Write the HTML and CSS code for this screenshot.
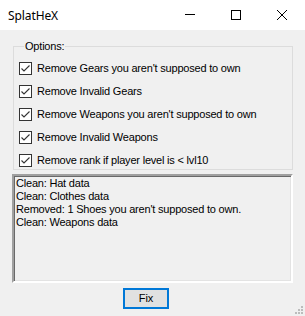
FILE: index.html
```html
<!DOCTYPE html>
<html>
<head>
<meta charset="utf-8">
<link rel="stylesheet" href="styles.css">
</head>
<body>
<div class="window">
  <div class="titlebar">
    <span class="title">SplatHeX</span>
    <div class="controls">
      <span class="ctl"><svg width="10" height="10" viewBox="0 0 10 10"><line x1="0" y1="4.5" x2="10" y2="4.5" stroke="#000" stroke-width="1"/></svg></span>
      <span class="ctl"><svg width="10" height="10" viewBox="0 0 10 10"><rect x="0.5" y="0.5" width="9" height="9" fill="none" stroke="#000" stroke-width="1"/></svg></span>
      <span class="ctl"><svg width="10" height="10" viewBox="0 0 10 10"><path d="M0 0L10 10M10 0L0 10" stroke="#000" stroke-width="1"/></svg></span>
    </div>
  </div>
  <div class="content">
    <fieldset class="group">
      <legend class="legend">Options:</legend>
      <div class="options">
        <label class="opt"><svg class="box" width="13" height="13" viewBox="0 0 13 13"><rect x="0.5" y="0.5" width="12" height="12" fill="#fff" stroke="#333"/><polyline points="2.5,6.5 5,9 10.5,3.5" fill="none" stroke="#333" stroke-width="1.1"/></svg><span>Remove Gears you aren't supposed to own</span></label>
        <label class="opt"><svg class="box" width="13" height="13" viewBox="0 0 13 13"><rect x="0.5" y="0.5" width="12" height="12" fill="#fff" stroke="#333"/><polyline points="2.5,6.5 5,9 10.5,3.5" fill="none" stroke="#333" stroke-width="1.1"/></svg><span>Remove Invalid Gears</span></label>
        <label class="opt"><svg class="box" width="13" height="13" viewBox="0 0 13 13"><rect x="0.5" y="0.5" width="12" height="12" fill="#fff" stroke="#333"/><polyline points="2.5,6.5 5,9 10.5,3.5" fill="none" stroke="#333" stroke-width="1.1"/></svg><span>Remove Weapons you aren't supposed to own</span></label>
        <label class="opt"><svg class="box" width="13" height="13" viewBox="0 0 13 13"><rect x="0.5" y="0.5" width="12" height="12" fill="#fff" stroke="#333"/><polyline points="2.5,6.5 5,9 10.5,3.5" fill="none" stroke="#333" stroke-width="1.1"/></svg><span>Remove Invalid Weapons</span></label>
        <label class="opt"><svg class="box" width="13" height="13" viewBox="0 0 13 13"><rect x="0.5" y="0.5" width="12" height="12" fill="#fff" stroke="#333"/><polyline points="2.5,6.5 5,9 10.5,3.5" fill="none" stroke="#333" stroke-width="1.1"/></svg><span>Remove rank if player level is &lt; lvl10</span></label>
      </div>
    </fieldset>
    <div class="log">
      <div>Clean: Hat data</div>
      <div>Clean: Clothes data</div>
      <div>Removed: 1 Shoes you aren't supposed to own.</div>
      <div>Clean: Weapons data</div>
    </div>
    <div class="footer">
      <button class="btn">Fix</button>
      <svg class="grip" width="9" height="9" viewBox="0 0 9 9">
        <rect x="6" y="0" width="2" height="2" fill="#bcbcbc"/>
        <rect x="3" y="3" width="2" height="2" fill="#bcbcbc"/>
        <rect x="6" y="3" width="2" height="2" fill="#bcbcbc"/>
        <rect x="0" y="6" width="2" height="2" fill="#bcbcbc"/>
        <rect x="3" y="6" width="2" height="2" fill="#bcbcbc"/>
        <rect x="6" y="6" width="2" height="2" fill="#bcbcbc"/>
      </svg>
    </div>
  </div>
</div>
</body>
</html>
```
FILE: styles.css
```css
* { box-sizing: border-box; }
html, body { margin: 0; padding: 0; }
body {
  width: 305px;
  height: 316px;
  background: #f0f0f0;
  font-family: "Liberation Sans", Arial, sans-serif;
  font-size: 11px;
  letter-spacing: -0.2px;
  color: #000;
  overflow: hidden;
}
.window { width: 305px; height: 316px; display: flex; flex-direction: column; }
.titlebar {
  height: 30px;
  background: #fff;
  display: flex;
  align-items: center;
  justify-content: space-between;
}
.title {
  font-family: "Noto Sans", "Open Sans", sans-serif;
  font-size: 12px;
  letter-spacing: -0.1px;
  margin-left: 8px;
  color: #000;
}
.controls { display: flex; height: 30px; }
.ctl {
  width: 46px;
  height: 30px;
  display: flex;
  align-items: center;
  justify-content: center;
}
.ctl svg { display: block; }
.content {
  flex: 1;
  display: flex;
  flex-direction: column;
  padding: 10px 12px 0 13px;
}
.group {
  margin: 0;
  width: 280px;
  border: 1px solid #dcdcdc;
  padding: 0 0 2px 5px;
  min-width: 0;
}
.legend {
  padding: 0 1px;
  margin-left: 5px;
  line-height: 13px;
  font-size: 11px;
}
.options {
  display: flex;
  flex-direction: column;
  gap: 10px;
  padding-top: 9px;
}
.opt {
  display: flex;
  align-items: center;
  height: 13px;
  line-height: 13px;
  gap: 5px;
  white-space: nowrap;
}
.box { display: block; flex: none; }
.log {
  margin-top: 4px;
  width: 281px;
  height: 109px;
  border-style: solid;
  border-width: 2px;
  border-color: #a0a0a0 #fff #fff #a0a0a0;
  box-shadow: inset 1px 1px 0 #696969, inset -1px -1px 0 #e3e3e3;
  padding: 1px 2px;
  line-height: 13px;
  background: #f0f0f0;
  margin-left: -1px;
}
.footer {
  flex: 1;
  display: flex;
  align-items: flex-start;
  justify-content: space-between;
  padding-left: 110px;
}
.btn {
  margin-top: 5px;
  width: 46px;
  height: 21px;
  border: 2px solid #0078d7;
  background: #e1e1e1;
  font-family: "Liberation Sans", Arial, sans-serif;
  font-size: 11px;
  color: #000;
  padding: 0;
  line-height: 15px;
}
.grip { align-self: flex-end; margin-right: -11px; margin-bottom: 1px; display: block; }
```
